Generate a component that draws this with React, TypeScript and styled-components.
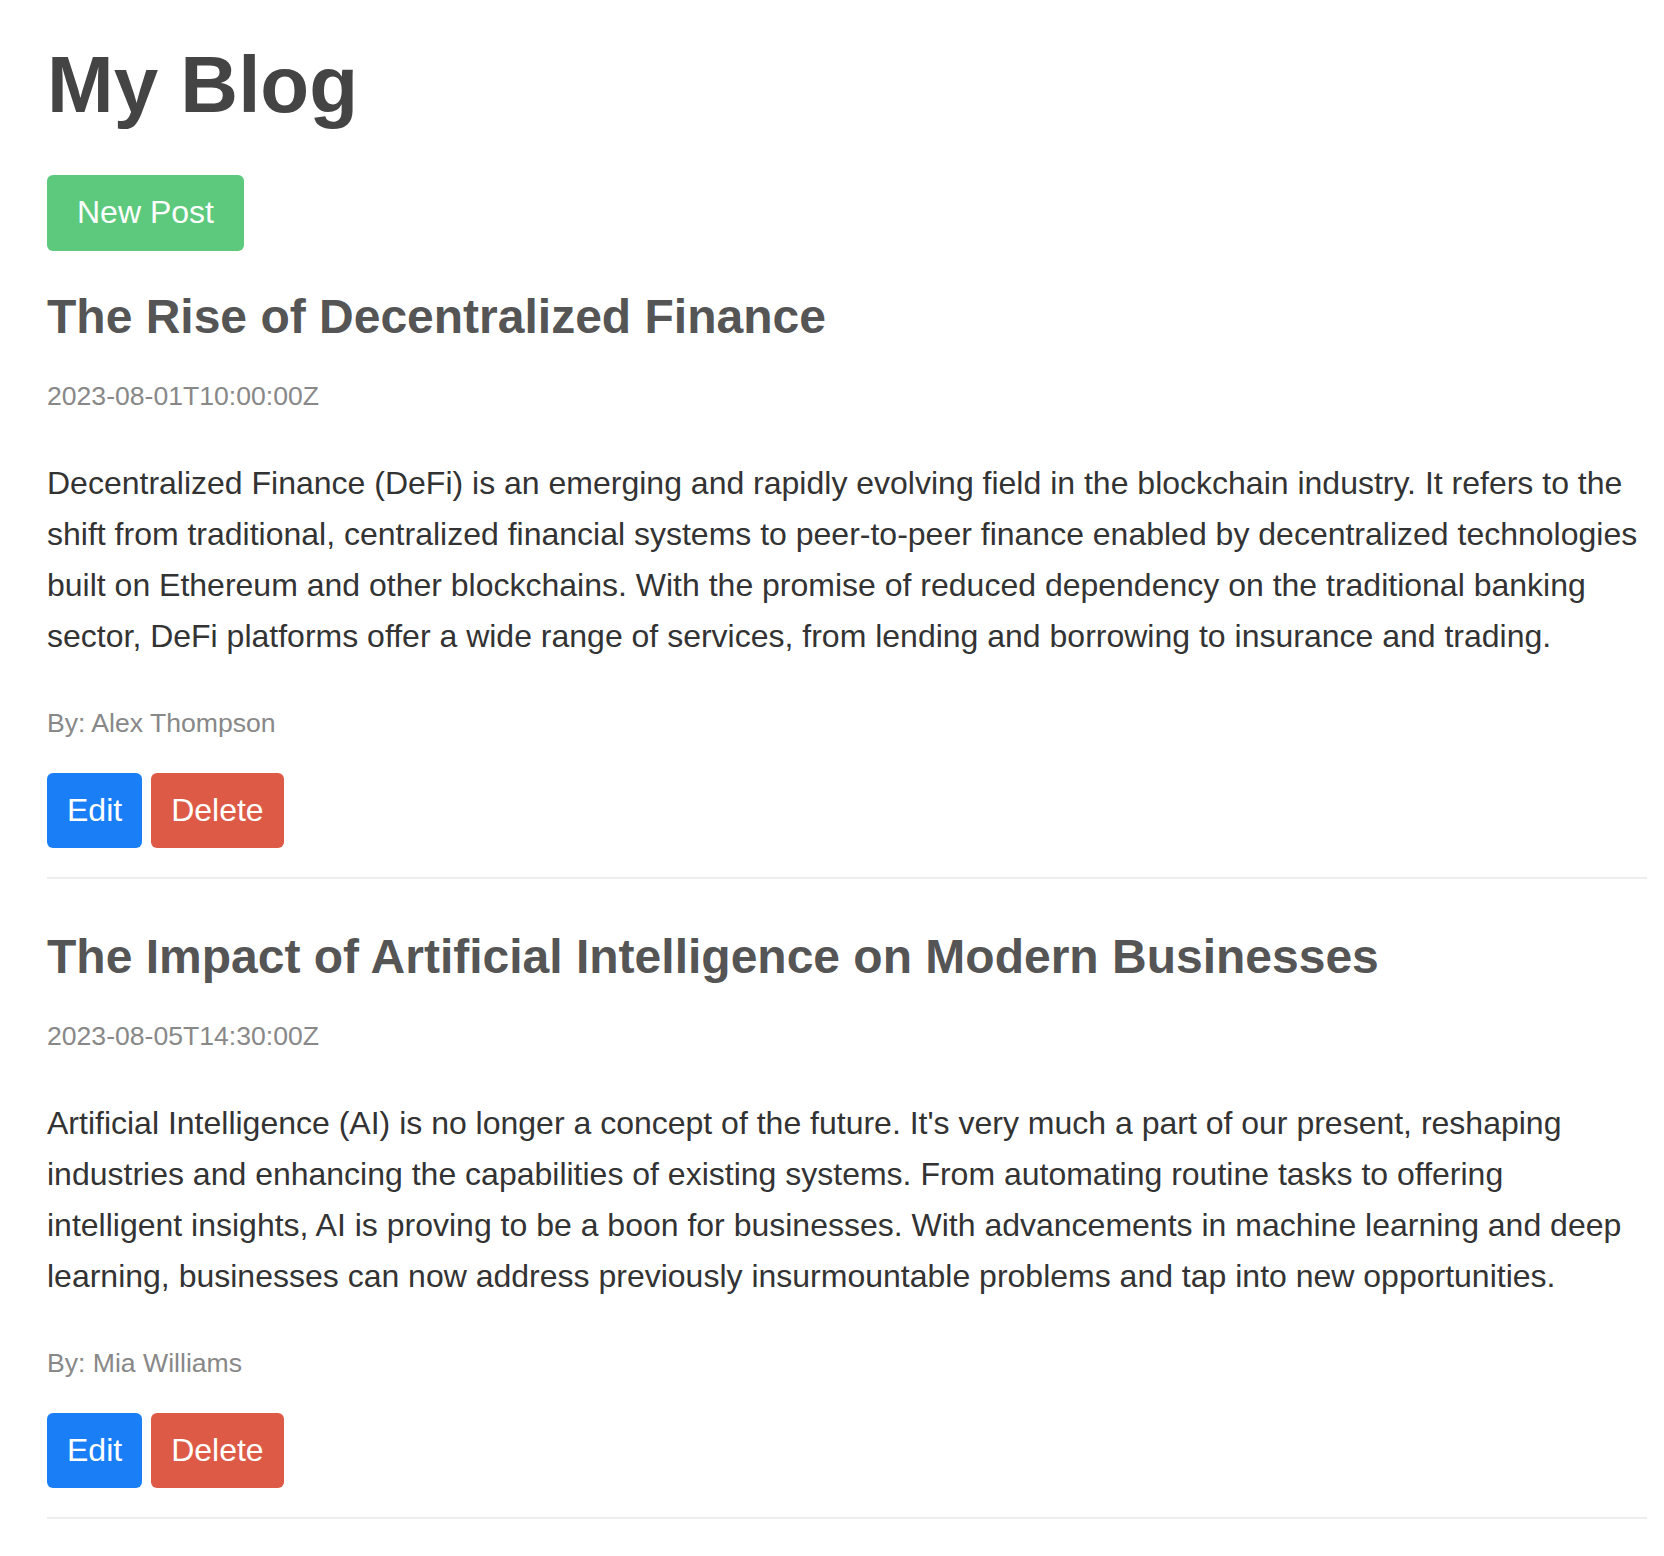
import React from "react";
import styled, { createGlobalStyle } from "styled-components";

const GlobalStyle = createGlobalStyle`
  html, body {
    margin: 0;
    padding: 0;
    background: #ffffff;
  }
  body {
    font-family: "Liberation Sans", Arial, Helvetica, sans-serif;
  }
  * {
    box-sizing: border-box;
  }
`;

const Page = styled.main`
  padding: 39px 17px 40px 47px;
`;

const Title = styled.h1`
  margin: 0 0 44px;
  font-size: 80px;
  line-height: 92px;
  font-weight: 700;
  color: #444444;
`;

type Tone = "green" | "blue" | "red";

const toneColors: Record<Tone, string> = {
  green: "#5cc97c",
  blue: "#1a7ff7",
  red: "#dd5b46",
};

const Button = styled.button<{ $tone: Tone; $wide?: boolean }>`
  display: inline-block;
  border: none;
  border-radius: 6px;
  background: ${(p) => toneColors[p.$tone]};
  color: #ffffff;
  font-family: "Liberation Sans", Arial, Helvetica, sans-serif;
  font-size: 32px;
  line-height: 35px;
  font-weight: 400;
  padding: ${(p) => (p.$wide ? "20px 30px 21px" : "20px 20px")};
  cursor: pointer;
`;

const Toolbar = styled.div`
  display: flex;
  margin-bottom: 38px;
`;

const PostList = styled.div`
  display: flex;
  flex-direction: column;
`;

const Post = styled.article`
  padding-bottom: 29px;
  border-bottom: 2px solid #eeeeee;
  margin-bottom: 50px;
`;

const PostTitle = styled.h2`
  margin: 0 0 37px;
  font-size: 48px;
  line-height: 55px;
  font-weight: 700;
  color: #555555;
`;

const Meta = styled.p<{ $gap: number }>`
  margin: 0 0 ${(p) => p.$gap}px;
  font-size: 26.6px;
  line-height: 31px;
  color: #888888;
`;

const Body = styled.p`
  margin: 0 0 46px;
  font-size: 32px;
  line-height: 51px;
  color: #333333;
`;

const Actions = styled.div`
  display: flex;
  gap: 9px;
`;

const posts = [
  {
    id: 1,
    title: "The Rise of Decentralized Finance",
    date: "2023-08-01T10:00:00Z",
    body:
      "Decentralized Finance (DeFi) is an emerging and rapidly evolving field in the blockchain industry. It refers to the shift from traditional, centralized financial systems to peer-to-peer finance enabled by decentralized technologies built on Ethereum and other blockchains. With the promise of reduced dependency on the traditional banking sector, DeFi platforms offer a wide range of services, from lending and borrowing to insurance and trading.",
    author: "Alex Thompson",
  },
  {
    id: 2,
    title: "The Impact of Artificial Intelligence on Modern Businesses",
    date: "2023-08-05T14:30:00Z",
    body:
      "Artificial Intelligence (AI) is no longer a concept of the future. It's very much a part of our present, reshaping industries and enhancing the capabilities of existing systems. From automating routine tasks to offering intelligent insights, AI is proving to be a boon for businesses. With advancements in machine learning and deep learning, businesses can now address previously insurmountable problems and tap into new opportunities.",
    author: "Mia Williams",
  },
];

export default function App() {
  return (
    <>
      <GlobalStyle />
      <Page>
        <Title>My Blog</Title>
        <Toolbar>
          <Button $tone="green" $wide>
            New Post
          </Button>
        </Toolbar>
        <PostList>
          {posts.map((post) => (
            <Post key={post.id}>
              <PostTitle>{post.title}</PostTitle>
              <Meta $gap={46}>{post.date}</Meta>
              <Body>{post.body}</Body>
              <Meta $gap={34}>By: {post.author}</Meta>
              <Actions>
                <Button $tone="blue">Edit</Button>
                <Button $tone="red">Delete</Button>
              </Actions>
            </Post>
          ))}
        </PostList>
      </Page>
    </>
  );
}
